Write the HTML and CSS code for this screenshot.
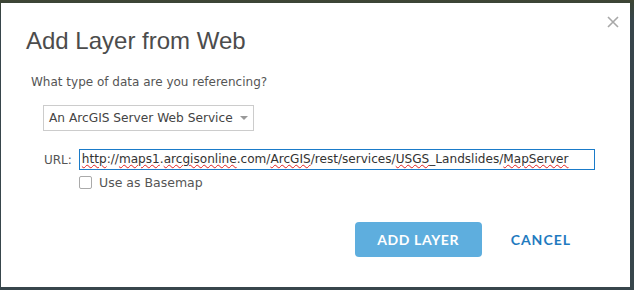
FILE: index.html
```html
<!DOCTYPE html>
<html lang="en">
<head>
  <meta charset="UTF-8">
  <title>Add Layer from Web</title>
  <link rel="stylesheet" href="styles.css">
</head>
<body>
  <div class="dialog">
    <button class="close" aria-label="Close">
      <svg width="12" height="12" viewBox="0 0 12 12"><path d="M1 1L11 11M11 1L1 11" stroke="#a8a8a8" stroke-width="1.6" fill="none"/></svg>
    </button>
    <h2 class="title">Add Layer from Web</h2>
    <p class="question">What type of data are you referencing?</p>

    <div class="select">
      <span>An ArcGIS Server Web Service</span>
      <span class="arrow"></span>
    </div>

    <div class="url-row">
      <label>URL:</label>
      <div class="url-box"><span class="typo">http</span>://<span class="typo">maps1</span>.<span class="typo">arcgisonline</span>.com/<span class="typo">ArcGIS</span>/rest/services/<span class="typo">USGS</span>_Landslides/<span class="typo">MapServer</span></div>
    </div>

    <div class="check-row">
      <span class="box"></span>
      <span>Use as Basemap</span>
    </div>

    <div class="actions">
      <button class="btn-add">ADD LAYER</button>
      <button class="btn-cancel">CANCEL</button>
    </div>
  </div>
</body>
</html>
```

FILE: styles.css
```css
html, body { margin: 0; height: 100%; }
body {
  background: linear-gradient(to bottom, #3f4634 0, #3a4437 3px, #37454b 20px, #38464c 100%);
  font-family: "DejaVu Sans", Verdana, sans-serif;
  color: #555;
  padding: 3px 4px 3px 1px;
  box-sizing: border-box;
}

.dialog {
  position: relative;
  background: #fff;
  height: 284px;
  box-sizing: border-box;
  padding: 24px 0 0 0;
}

.close {
  position: absolute;
  top: 13px;
  right: 11px;
  border: none;
  background: none;
  padding: 0;
  cursor: pointer;
}

.title {
  margin: 0 0 0 25px;
  font-family: "Liberation Sans", Arial, sans-serif;
  font-weight: normal;
  font-size: 24px;
  color: #4c4c4c;
  line-height: 28px;
}

.question {
  margin: 19px 0 0 30px;
  font-size: 12px;
  line-height: 16px;
}

.select {
  margin: 15px 0 0 42px;
  width: 211px;
  height: 26px;
  box-sizing: border-box;
  border: 1px solid #ccc;
  display: flex;
  align-items: center;
  justify-content: space-between;
  padding: 0 5px 0 5px;
  font-size: 12.2px;
  color: #444;
  white-space: nowrap;
}
.arrow {
  width: 0;
  height: 0;
  border-left: 4px solid transparent;
  border-right: 4px solid transparent;
  border-top: 4px solid #999;
}

.url-row {
  display: flex;
  align-items: center;
  margin: 18px 0 0 43px;
  gap: 7px;
}
.url-row label { font-size: 12px; }
.url-box {
  width: 516px;
  height: 21px;
  box-sizing: border-box;
  border: 1px solid #1a7bc9;
  padding: 0 2px;
  font-size: 12.1px;
  line-height: 18px;
  color: #333;
  white-space: nowrap;
  overflow: hidden;
}
.typo {
  text-decoration: underline wavy #e02020;
  text-decoration-thickness: 1px;
  text-underline-offset: 1px;
}

.check-row {
  display: flex;
  align-items: center;
  gap: 7px;
  margin: 5px 0 0 78px;
  font-size: 12.5px;
}
.box {
  width: 13px;
  height: 13px;
  box-sizing: border-box;
  border: 1px solid #aaa;
  border-radius: 2px;
}

.actions {
  display: flex;
  justify-content: flex-end;
  margin: 32px 0 0 0;
  padding-right: 51px;
}
.btn-add {
  width: 127px;
  height: 35px;
  border: none;
  border-radius: 4px;
  background: #5eaede;
  color: #fff;
  font-family: Lato, "Open Sans", sans-serif;
  font-weight: bold;
  font-size: 14px;
  letter-spacing: 0.6px;
  cursor: pointer;
}
.btn-cancel {
  margin-left: 21px;
  border: none;
  background: none;
  color: #1f7bbf;
  font-family: Lato, "Open Sans", sans-serif;
  font-weight: bold;
  font-size: 14px;
  letter-spacing: 1px;
  padding: 0 8px;
  cursor: pointer;
}
```
